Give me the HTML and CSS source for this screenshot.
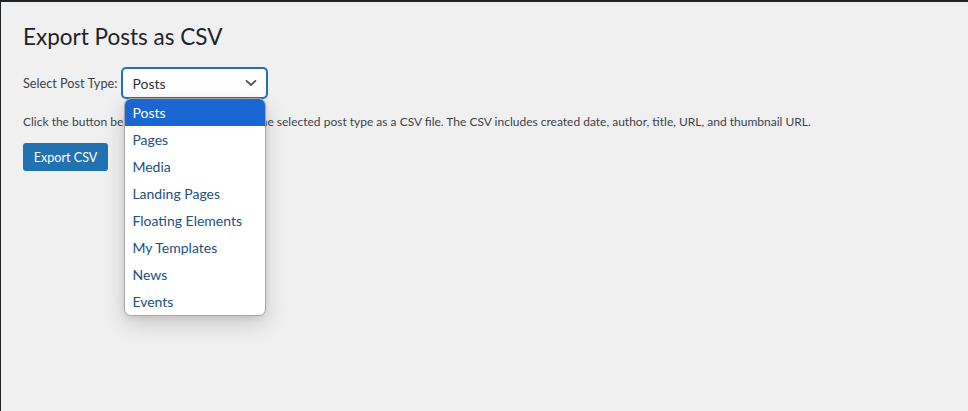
FILE: index.html
```html
<!DOCTYPE html>
<html>
<head>
<meta charset="utf-8">
<title>Export Posts as CSV</title>
<link rel="stylesheet" href="styles.css">
</head>
<body>
<div class="frame">
  <div class="wrap">
    <h1 class="title">Export Posts as CSV</h1>
    <div class="field-row">
      <label class="field-label" for="pt">Select Post Type:</label>
      <div class="select-wrap">
        <div class="select" id="pt">
          <span class="select-value">Posts</span>
          <svg class="chev" width="12" height="8" viewBox="0 0 12 8" aria-hidden="true"><path d="M1.5 1.8 6 6 10.5 1.8" fill="none" stroke="#50575e" stroke-width="1.8" stroke-linecap="round" stroke-linejoin="round"/></svg>
        </div>
        <ul class="dropdown">
          <li class="opt opt-active">Posts</li>
          <li class="opt">Pages</li>
          <li class="opt">Media</li>
          <li class="opt">Landing Pages</li>
          <li class="opt">Floating Elements</li>
          <li class="opt">My Templates</li>
          <li class="opt">News</li>
          <li class="opt">Events</li>
        </ul>
      </div>
    </div>
    <p class="desc">Click the button below to export all posts of the selected post type as a CSV file. The CSV includes created date, author, title, URL, and thumbnail URL.</p>
    <button class="btn" type="button">Export CSV</button>
  </div>
</div>
</body>
</html>
```
FILE: styles.css
```css
html, body {
  margin: 0;
  height: 100%;
}
body {
  background: #1d2327;
  font-family: Lato, "Noto Sans", sans-serif;
  color: #3c434a;
}
.frame {
  box-sizing: border-box;
  height: 100%;
  margin: 2px 0 0 1px;
  background: #f0f0f1;
}
.wrap {
  padding: 20px 0 0 22px;
}
.title {
  margin: 0;
  font-size: 22.5px;
  font-weight: 400;
  line-height: 30px;
  color: #1d2327;
}
.field-row {
  display: flex;
  align-items: center;
  gap: 5px;
  margin-top: 16px;
}
.field-label {
  font-size: 12.7px;
  color: #3c434a;
}
.select-wrap {
  position: relative;
}
.select {
  box-sizing: border-box;
  width: 145px;
  height: 30px;
  border: 1px solid #2271b1;
  box-shadow: 0 0 0 1px #2271b1;
  border-radius: 4px;
  background: #fff;
  display: flex;
  align-items: center;
  justify-content: space-between;
  padding: 0 9px 0 9px;
}
.select-value {
  font-size: 14px;
  color: #2c3338;
}
.chev {
  display: block;
}
.dropdown {
  position: absolute;
  left: 2px;
  top: 30px;
  width: 142px;
  margin: 0;
  padding: 0;
  list-style: none;
  background: #fff;
  border: 1px solid #a7a7a7;
  border-radius: 7px;
  box-sizing: border-box;
  overflow: hidden;
  box-shadow: 0 8px 22px rgba(0, 0, 0, 0.16), 0 2px 6px rgba(0, 0, 0, 0.08);
  z-index: 2;
}
.opt {
  height: 27px;
  line-height: 27px;
  padding-left: 7px;
  font-size: 14px;
  color: #22507c;
  white-space: nowrap;
}
.opt-active {
  background: #1a66d2;
  color: #fff;
}
.desc {
  margin: 14px 0 0;
  font-size: 12px;
  line-height: 20px;
  color: #3c434a;
}
.btn {
  margin-top: 11px;
  width: 85px;
  height: 28px;
  padding: 0;
  border: 0;
  border-radius: 3px;
  background: #2271b1;
  color: #fff;
  font-family: inherit;
  font-size: 12.6px;
  cursor: pointer;
}
```
